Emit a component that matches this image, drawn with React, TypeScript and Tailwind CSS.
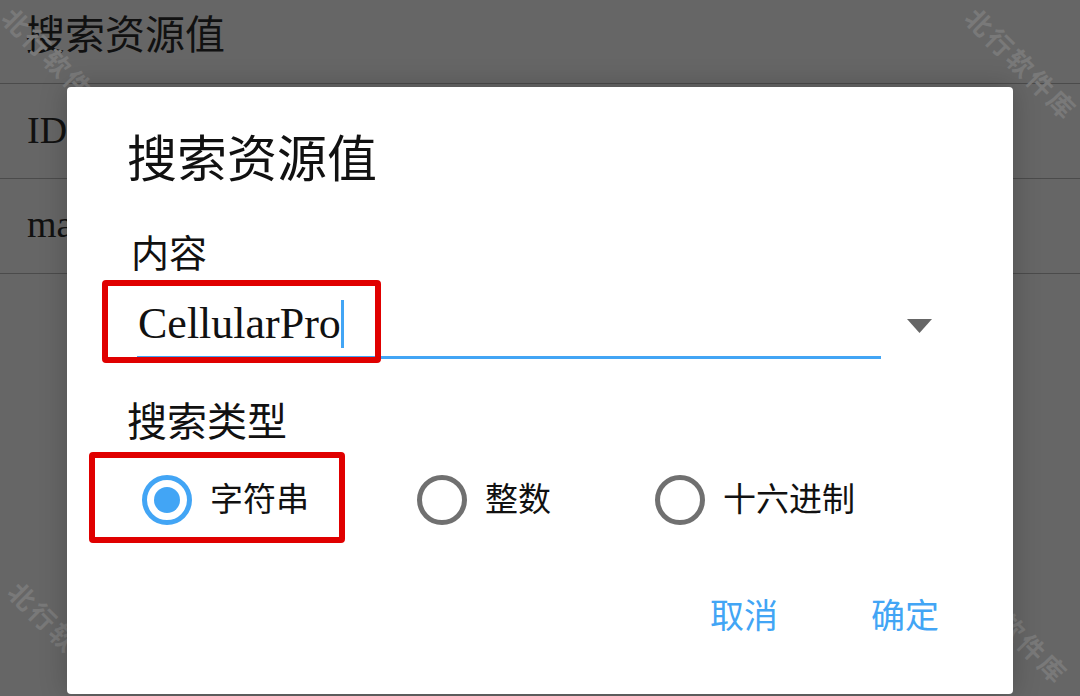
import React from 'react';

const FONT = '"Liberation Serif", "Noto Sans CJK SC", serif';
const BLUE = '#42a5f5';

function Watermark({ className }: { className: string }) {
  return (
    <div
      className={`absolute origin-top-left rotate-45 whitespace-nowrap text-[26px] font-bold tracking-[3px] text-[#797979] ${className}`}
      style={{ fontFamily: '"Noto Sans CJK SC", sans-serif' }}
    >
      北行软件库
    </div>
  );
}

function Radio({ checked, label, className = '' }: { checked?: boolean; label: string; className?: string }) {
  return (
    <div className={`flex items-center ${className}`}>
      <span
        className={`w-[50px] h-[50px] rounded-full border-[5px] flex items-center justify-center shrink-0 ${
          checked ? 'border-[#42a5f5]' : 'border-[#707070]'
        }`}
      >
        {checked && <span className="w-[26px] h-[26px] rounded-full bg-[#42a5f5]" />}
      </span>
      <span className="ml-[18px] text-[33px] leading-[40px] text-[#111]">{label}</span>
    </div>
  );
}

export default function App() {
  return (
    <div className="relative w-[1080px] h-[696px] overflow-hidden bg-[#666666]" style={{ fontFamily: FONT }}>
      {/* page behind the dialog */}
      <div className="h-[84px] border-b border-[#4b4b4b] pl-[25px] pt-[13px]">
        <div className="text-[40px] leading-[46px] text-[#111]">搜索资源值</div>
      </div>
      <div className="h-[95px] border-b border-[#4b4b4b] pl-[27px] pt-[23px]">
        <div className="text-[38px] leading-[46px] text-[#111]">ID</div>
      </div>
      <div className="h-[95px] border-b border-[#4b4b4b] pl-[27px] pt-[22px]">
        <div className="text-[38px] leading-[46px] text-[#111]">ma</div>
      </div>

      <Watermark className="left-[22px] top-[-2px]" />
      <Watermark className="left-[985px] top-[-2px]" />
      <Watermark className="left-[28px] top-[572px]" />
      <Watermark className="left-[976px] top-[562px]" />

      {/* dialog */}
      <div className="absolute left-[67px] top-[87px] w-[946px] h-[607px] bg-white rounded-[4px] shadow-[0_0_28px_rgba(0,0,0,0.22)] pl-[60px] pt-[45px]">
        <div className="text-[50px] leading-[56px] text-[#111]">搜索资源值</div>

        <div className="mt-[44px] ml-[4px] text-[38px] leading-[44px] text-[#111]">内容</div>

        <div className="relative mt-[24px] flex">
          <div className="ml-[10px] w-[744px] border-b-[3px] border-[#42a5f5] pb-[8px]">
            <div className="flex items-center h-[48px]">
              <span className="ml-[1px] text-[44px] leading-[48px] text-[#111]">CellularPro</span>
              <span className="w-[3px] h-[48px] bg-[#42a5f5]" />
            </div>
          </div>
          <svg className="ml-[26px] mt-[19px]" width="25" height="14" viewBox="0 0 25 14">
            <polygon points="0,0 25,0 12.5,14" fill="#666666" />
          </svg>
          <div className="absolute left-[-25px] top-[-20px] w-[279px] h-[83px] border-[6px] border-[#e00000] rounded-[4px]" />
        </div>

        <div className="mt-[41px] text-[40px] leading-[46px] text-[#111]">搜索类型</div>

        <div className="relative mt-[29px] ml-[15px] flex h-[50px] items-center">
          <Radio checked label="字符串" />
          <Radio label="整数" className="ml-[108px]" />
          <Radio label="十六进制" className="ml-[104px]" />
          <div className="absolute left-[-53px] top-[-23px] w-[256px] h-[91px] border-[6px] border-[#e00000] rounded-[4px]" />
        </div>

        <div className="mt-[72px] flex justify-end pr-[74px] gap-[93px] text-[34px] leading-[40px]" style={{ color: BLUE }}>
          <span>取消</span>
          <span>确定</span>
        </div>
      </div>
    </div>
  );
}
